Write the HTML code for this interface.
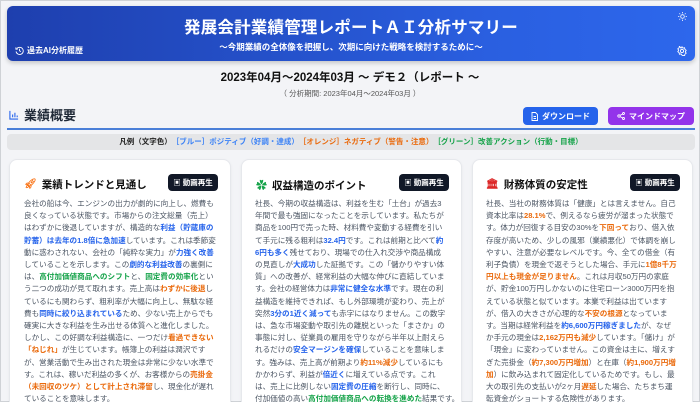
<!DOCTYPE html>
<html><head><meta charset="utf-8"><style>
*{margin:0;padding:0;box-sizing:border-box}
html,body{width:700px;height:402px;overflow:hidden}
body{background:#f3f4f7;font-family:"Liberation Sans","Noto Sans CJK JP",sans-serif;position:relative;border:1px solid #cfd2d6}
.hdr{position:absolute;left:6px;top:5px;width:688px;height:55px;border-radius:6px;background:linear-gradient(90deg,#1e3fae,#2a5fe0 70%,#2d67ec);box-shadow:0 2px 5px rgba(0,0,0,.2);color:#fff}
.hdr h1{position:absolute;left:0;right:0;top:8px;text-align:center;font-size:16.5px;font-weight:bold;letter-spacing:0.2px}
.hdr .sub{position:absolute;left:0;right:0;top:35px;text-align:center;font-size:8.5px;font-weight:bold}
.hist{position:absolute;left:8px;top:39px;font-size:8px;font-weight:bold;display:flex;align-items:center;gap:3px}
.t2{position:absolute;left:0;right:0;top:68px;text-align:center;font-size:11.5px;font-weight:bold;color:#111}
.t3{position:absolute;left:0;right:0;top:87px;text-align:center;font-size:7.5px;color:#555}
.sec{position:absolute;left:8px;top:104px;font-size:13px;font-weight:bold;color:#1f2937;display:flex;align-items:center;gap:5px}
.line{position:absolute;left:6px;top:127px;width:688px;height:1.5px;background:#4a7fd8}
.btn{position:absolute;top:106px;height:18px;border-radius:4px;color:#fff;font-size:8px;font-weight:bold;display:flex;align-items:center;justify-content:center;gap:4px}
.legend{position:absolute;left:6px;top:133px;width:688px;height:16px;border-radius:4px;background:#e4e5e7;font-size:7.5px;font-weight:bold;text-align:center;line-height:16px;color:#222}
.card{position:absolute;top:158px;height:260px;background:#fff;border-radius:8px;border:1px solid #e6e8ec;box-shadow:0 1px 3px rgba(0,0,0,.05)}
.ct{position:absolute;top:17px;font-size:10.5px;font-weight:bold;color:#111;display:flex;align-items:center;gap:5px}
.play{position:absolute;top:14px;width:50px;height:17px;background:#111827;border-radius:4px;color:#fff;font-size:7.5px;font-weight:bold;display:flex;align-items:center;justify-content:center;gap:3px}
.txt{position:absolute;top:38px;font-size:7.6px;line-height:12.2px;color:#4b5563;white-space:nowrap}
.b{color:#2563eb;font-weight:bold}.o{color:#ea6a0c;font-weight:bold}.g{color:#16a34a;font-weight:bold}
</style></head><body>
<div class="hdr">
<h1>発展会計業績管理レポートＡＩ分析サマリー</h1>
<div class="sub">〜今期業績の全体像を把握し、次期に向けた戦略を検討するために〜</div>
<div class="hist"><svg width="9" height="9" viewBox="0 0 10 10" fill="none" stroke="#fff" stroke-width="1"><path d="M2 3A4 4 0 1 1 1.2 6"/><path d="M1 1.5V3.5H3"/><path d="M5 3V5.3L6.5 6.3"/></svg>過去AI分析履歴</div>
<svg style="position:absolute;right:8px;top:6px" width="9" height="9" viewBox="0 0 10 10" stroke="#fff" stroke-width="0.9" fill="none"><circle cx="5" cy="5" r="2"/><path d="M5 0v1.5M5 8.5V10M0 5h1.5M8.5 5H10M1.5 1.5l1 1M7.5 7.5l1 1M1.5 8.5l1-1M7.5 2.5l1-1"/></svg>
<svg style="position:absolute;right:8px;top:40px" width="10" height="10" viewBox="0 0 10 10" stroke="#fff" stroke-width="0.9" fill="none"><circle cx="5" cy="5" r="1.6"/><path d="M5 .8l1 1.3 1.6-.3.3 1.6 1.3 1-.9 1.4.9 1.4-1.3 1-.3 1.6-1.6-.3L5 9.2 4 7.9l-1.6.3-.3-1.6-1.3-1 .9-1.4-.9-1.4 1.3-1 .3-1.6L4 2.1z"/></svg>
</div>
<div class="t2">2023年04月〜2024年03月 〜 デモ２（レポート 〜</div>
<div class="t3">（ 分析期間: 2023年04月〜2024年03月 ）</div>
<div class="sec"><svg width="10" height="10" viewBox="0 0 11 11" stroke="#2563eb" stroke-width="1.2" fill="none"><path d="M1 1v9h9M4 8V5M6.5 8V3M9 8V6"/></svg>業績概要</div>
<div class="btn" style="left:522px;width:75px;background:#2563eb"><svg width="7" height="9" viewBox="0 0 7 9" stroke="#fff" fill="none" stroke-width=".9"><path d="M1 .5h3.5L6.5 2.5v6H1z M2.5 4.5h2.5M2.5 6.5h2.5"/></svg>ダウンロード</div>
<div class="btn" style="left:607px;width:86px;background:#9333ea"><svg width="8" height="8" viewBox="0 0 8 8" stroke="#fff" fill="none" stroke-width=".9"><circle cx="2" cy="4" r="1.2"/><circle cx="6.5" cy="1.5" r="1"/><circle cx="6.5" cy="6.5" r="1"/><path d="M3 3.4l2.6-1.4M3 4.6l2.6 1.4"/></svg>マインドマップ</div>
<div class="line"></div>
<div class="legend">凡例（文字色）　<span style="color:#3b82f6">［ブルー］ポジティブ（好調・達成）</span>　<span style="color:#ea6a0c">［オレンジ］ネガティブ（警告・注意）</span>　<span style="color:#16a34a">［グリーン］改善アクション（行動・目標）</span></div>

<div class="card" style="left:8px;width:222px">
<div class="ct" style="left:14px"><span style="color:#f97316;font-size:10px">🚀︎</span>業績トレンドと見通し</div>
<div class="play" style="left:158px">▣ 動画再生</div>
<div class="txt" style="left:14px">会社の船は今、エンジンの出力が劇的に向上し、燃費も<br>良くなっている状態です。市場からの注文総量（売上）<br>はわずかに後退していますが、構造的な<span class="b">利益（貯蔵庫の</span><br><span class="b">貯蓄）は去年の1.8倍に急加速</span>しています。これは季節変<br>動に惑わされない、会社の「純粋な実力」が<span class="b">力強く改善</span><br>していることを示します。この<span class="b">劇的な利益改善</span>の裏側に<br>は、<span class="g">高付加価値商品へのシフト</span>と、<span class="g">固定費の効率化</span>とい<br>う二つの成功が見て取れます。売上高は<span class="o">わずかに後退</span>し<br>ているにも関わらず、粗利率が大幅に向上し、無駄な経<br>費も<span class="b">同時に絞り込まれている</span>ため、少ない売上からでも<br>確実に大きな利益を生み出せる体質へと進化しました。<br>しかし、この好調な利益構造に、一つだけ<span class="o">看過できない</span><br><span class="o">「ねじれ」</span>が生じています。帳簿上の利益は潤沢です<br>が、営業活動で生み出された現金は非常に少ない水準で<br>す。これは、稼いだ利益の多くが、お客様からの<span class="o">売掛金</span><br><span class="o">（未回収のツケ）として計上され滞留</span>し、現金化が遅れ<br>ていることを意味します。</div>
</div>

<div class="card" style="left:240px;width:221px">
<div class="ct" style="left:14px"><span style="color:#16a34a;font-size:11px">✿</span>収益構造のポイント</div>
<div class="play" style="left:157px">▣ 動画再生</div>
<div class="txt" style="left:13px">社長、今期の収益構造は、利益を生む「土台」が過去3<br>年間で最も強固になったことを示しています。私たちが<br>商品を100円で売った時、材料費や変動する経費を引い<br>て手元に残る粗利は<span class="b">32.4円</span>です。これは前期と比べて<span class="b">約</span><br><span class="b">6円も多く</span>残せており、現場での仕入れ交渉や商品構成<br>の見直しが<span class="b">大成功</span>した証拠です。この「儲かりやすい体<br>質」への改善が、経常利益の大幅な伸びに直結していま<br>す。会社の経営体力は<span class="b">非常に健全な水準</span>です。現在の利<br>益構造を維持できれば、もし外部環境が変わり、売上が<br>突然<span class="b">3分の1近く減って</span>も赤字にはなりません。この数字<br>は、急な市場変動や取引先の離脱といった「まさか」の<br>事態に対し、従業員の雇用を守りながら半年以上耐えら<br>れるだけの<span class="b">安全マージンを確保</span>していることを意味しま<br>す。強みは、売上高が前期より<span class="o">約11%減少</span>しているにも<br>かかわらず、利益が<span class="b">倍近く</span>に増えている点です。これ<br>は、売上に比例しない<span class="b">固定費の圧縮</span>を断行し、同時に、<br>付加価値の高い<span class="g">高付加価値商品への転換を進めた</span>結果です。</div>
</div>

<div class="card" style="left:471px;width:221px">
<div class="ct" style="left:13px"><span style="color:#dc2626;font-size:10px">🏛︎</span>財務体質の安定性</div>
<div class="play" style="left:157px">▣ 動画再生</div>
<div class="txt" style="left:13px">社長、当社の財務体質は「健康」とは言えません。自己<br>資本比率は<span class="o">28.1%</span>で、例えるなら疲労が溜まった状態で<br>す。体力が回復する目安の30%を<span class="o">下回って</span>おり、借入依<br>存度が高いため、少しの風邪（業績悪化）で体調を崩し<br>やすい、注意が必要なレベルです。今、全ての借金（有<br>利子負債）を現金で返そうとした場合、手元に<span class="o">1億8千万</span><br><span class="o">円以上も現金が足りません</span>。これは月収50万円の家庭<br>が、貯金100万円しかないのに住宅ローン3000万円を抱<br>えている状態と似ています。本業で利益は出ています<br>が、借入の大きさが心理的な<span class="o">不安の根源</span>となっていま<br>す。当期は経常利益を<span class="b">約6,600万円稼ぎました</span>が、なぜ<br>か手元の現金は<span class="o">2,162万円も減少</span>しています。「儲け」が<br>「現金」に変わっていません。この資金は主に、増えす<br>ぎた売掛金（<span class="o">約7,300万円増加</span>）と在庫（<span class="o">約1,900万円増</span><br><span class="o">加</span>）に飲み込まれて固定化しているためです。もし、最<br>大の取引先の支払いが2ヶ月<span class="o">遅延</span>した場合、たちまち運<br>転資金がショートする危険性があります。</div>
</div>
</body></html>
